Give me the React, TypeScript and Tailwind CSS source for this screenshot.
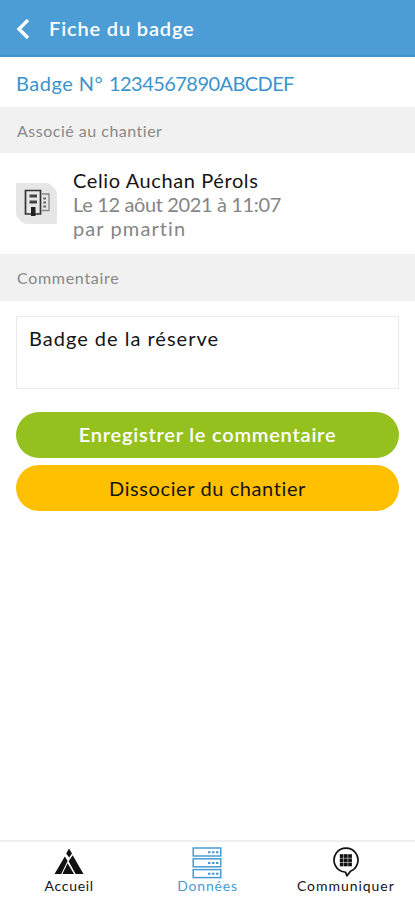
import React from "react";

function BuildingTile() {
  return (
    <svg width="41" height="41" viewBox="0 0 41 41" className="block shrink-0">
      <path d="M2 0H30Q33 0 35 2L39 6Q41 8 41 11V39Q41 41 39 41H11Q8 41 6 39L2 35Q0 33 0 30V2Q0 0 2 0Z" fill="#e6e6e6" />
      <g fill="none">
        <path d="M9.5 7.5H24.5V31H9.5Z" stroke="#333" strokeWidth="1.7" />
        <path d="M26 11H33V27.5H26" stroke="#888" strokeWidth="1.3" />
        <path d="M13.5 13H21M13.5 19H21" stroke="#444" strokeWidth="3" />
        <path d="M27.3 15.5H30M27.3 19.5H30M27.3 23.5H30" stroke="#666" strokeWidth="2.2" />
      </g>
      <path d="M15 24H19.5V33H15Z" fill="#222" />
    </svg>
  );
}

function HomeLogo() {
  return (
    <svg width="30" height="27" viewBox="0 0 30 27" className="block" fill="#111">
      <path d="M15 0.5L18 5.5L15.2 9.5L12.2 5.5Z" />
      <path d="M10.8 8.5L13.6 13L7.2 26H0.5Z" />
      <path d="M13.6 15.2L20 26H8.4Z" />
      <path d="M18.7 7.3L29.5 26H21.6L14.6 13.2Z" />
    </svg>
  );
}

function ServerIcon() {
  return (
    <svg width="30" height="32" viewBox="0 0 30 32" className="block" fill="none" stroke="#4a9bd3">
      {[1, 11.8, 22.6].map((y) => (
        <g key={y}>
          <rect x="1.2" y={y} width="27.6" height="8" strokeWidth="1.5" />
          <path d={`M16 ${y + 4.2}h2.5M20 ${y + 4.2}h2.5M24 ${y + 4.2}h2.5`} strokeWidth="2" />
        </g>
      ))}
    </svg>
  );
}

function ChatIcon() {
  return (
    <svg width="28" height="30" viewBox="0 0 28 30" className="block">
      <path
        d="M9.5 24.2A12 12 0 1 1 18.5 24.2L15 28.8L13.5 25.2Z"
        fill="none"
        stroke="#111"
        strokeWidth="1.7"
        strokeLinejoin="round"
      />
      {[7.2, 11.4, 15.6].map((y) =>
        [7.8, 12, 16.2].map((x) => (
          <rect key={`${x}-${y}`} x={x} y={y} width="3.7" height="3.7" fill="#111" />
        ))
      )}
    </svg>
  );
}

export default function App() {
  return (
    <div className="flex h-[900px] w-full flex-col bg-white font-['Lato','Open_Sans',sans-serif] text-xl text-[#151515]">
      <header className="flex h-[57px] shrink-0 items-center border-b-2 border-[#3a93c9] bg-[#4c9dd5] pl-4 text-white">
        <svg width="14" height="20" viewBox="0 0 14 20" className="mt-[3px] block" fill="none" stroke="white" strokeWidth="3.4">
          <path d="M12 1L3 10L12 19" />
        </svg>
        <h1 className="ml-[19px] whitespace-nowrap font-semibold tracking-[0.85px]">Fiche du badge</h1>
      </header>

      <div className="flex h-[50px] shrink-0 items-center whitespace-pre pt-0.5 pl-4 text-[#3c94cc]">
        <span className="tracking-[0.5px]">Badge N° </span>
        <span className="tracking-[-0.55px]">1234567890</span>
        <span className="tracking-[-0.6px]">ABCDEF</span>
      </div>

      <div className="flex h-[46px] shrink-0 items-center whitespace-nowrap bg-[#f1f1f1] pt-0.5 pl-[17px] text-base tracking-[0.5px] text-[#888]">
        Associé au chantier
      </div>

      <section className="flex h-[101px] shrink-0 pt-[15px] pl-4">
        <div className="pt-[15px]">
          <BuildingTile />
        </div>
        <div className="ml-4 whitespace-nowrap leading-6 text-[#858585]">
          <p className="tracking-[0.6px] text-[#151515]">Celio Auchan Pérols</p>
          <p className="tracking-[-0.36px]">Le 12 aôut 2021 à 11:07</p>
          <p className="tracking-[1.1px]">par pmartin</p>
        </div>
      </section>

      <div className="flex h-[47px] shrink-0 items-center whitespace-nowrap bg-[#f1f1f1] pl-[17px] text-base tracking-[0.7px] text-[#888]">
        Commentaire
      </div>

      <main className="flex flex-1 flex-col px-4 pt-[15px]">
        <div className="h-[73px] shrink-0 border border-[#e9e9e9] px-3 pt-[7px] tracking-[1px]">
          Badge de la réserve
        </div>
        <button className="mt-[23px] h-[46px] shrink-0 rounded-full bg-[#95c11f] pb-0.5 font-semibold tracking-[0.78px] text-white">
          Enregistrer le commentaire
        </button>
        <button className="mt-[7px] h-[46px] shrink-0 rounded-full bg-[#ffc000] tracking-[0.6px]">
          Dissocier du chantier
        </button>
      </main>

      <nav className="grid h-[60px] shrink-0 grid-cols-3 border-t-2 border-[#efefef] text-sm">
        <div className="flex flex-col items-center">
          <div className="flex h-[35px] items-center pt-1"><HomeLogo /></div>
          <span className="leading-[18px] tracking-[0.7px]">Accueil</span>
        </div>
        <div className="flex flex-col items-center text-[#4a9bd3]">
          <div className="flex h-[35px] items-center pt-1.5"><ServerIcon /></div>
          <span className="leading-[18px] tracking-[0.8px]">Données</span>
        </div>
        <div className="flex flex-col items-center">
          <div className="flex h-[35px] items-center pt-1"><ChatIcon /></div>
          <span className="leading-[18px] tracking-[0.95px]">Communiquer</span>
        </div>
      </nav>
    </div>
  );
}
